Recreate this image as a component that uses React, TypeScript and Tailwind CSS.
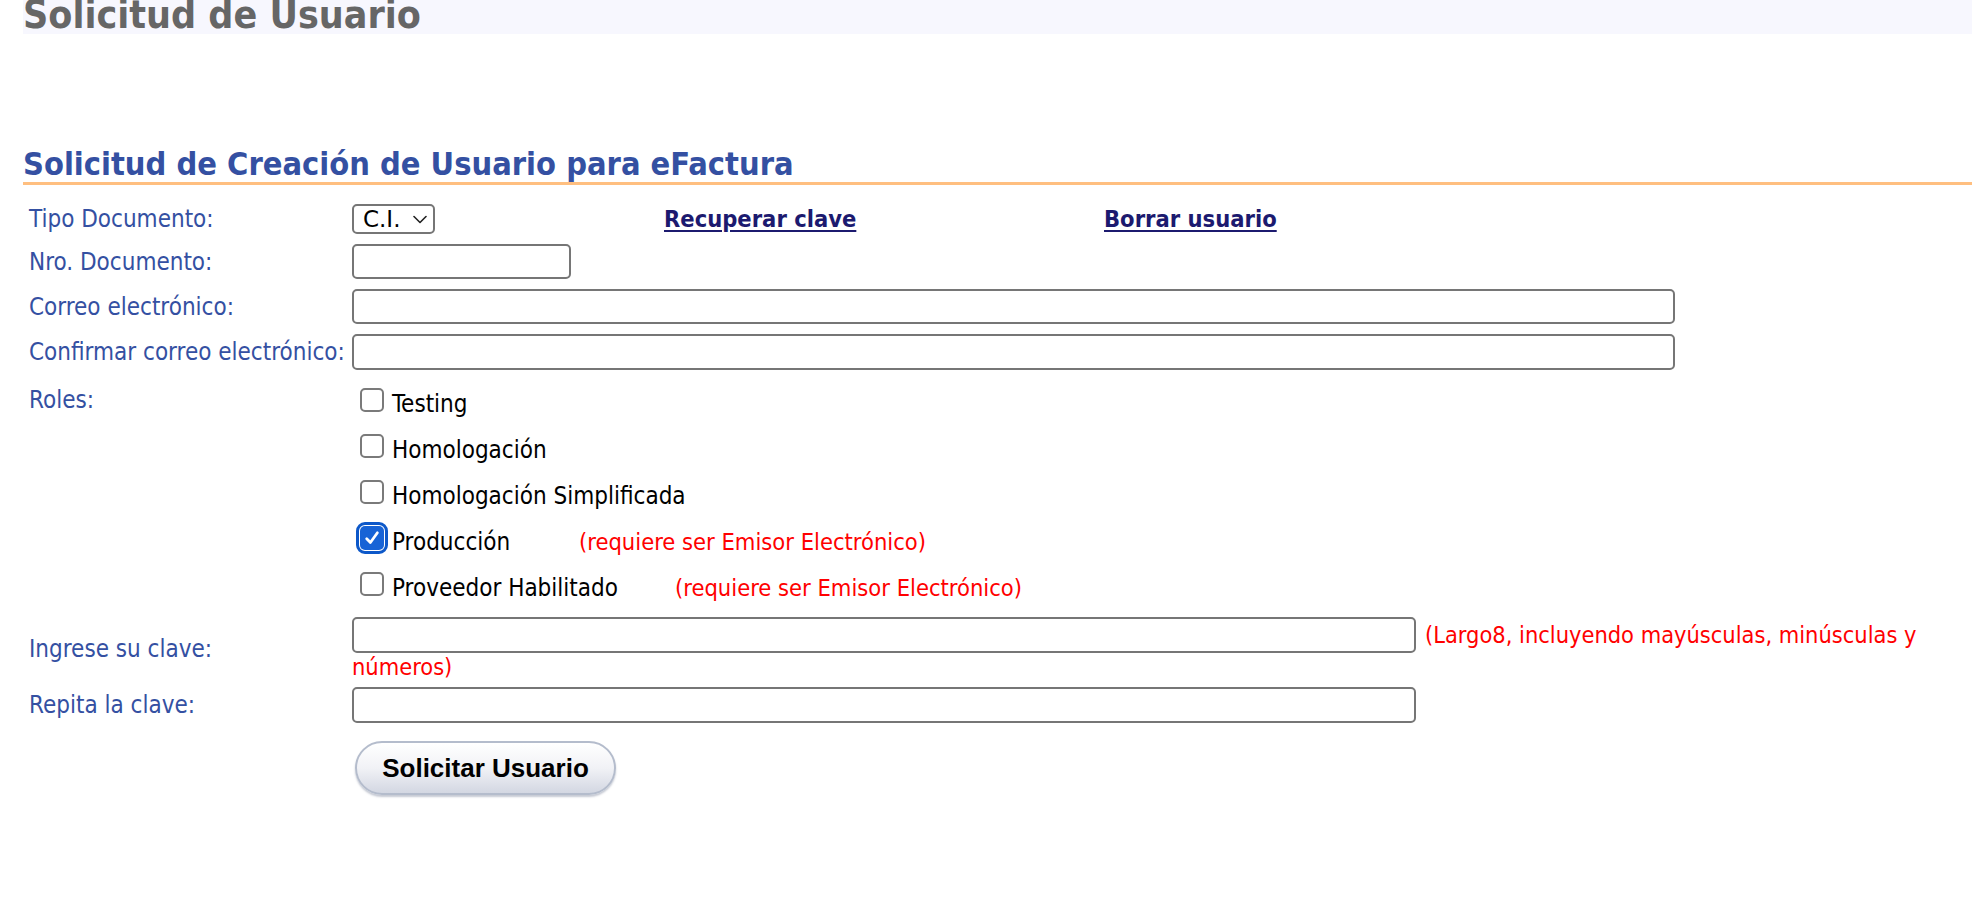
import React from "react";

function Box({ checked = false }: { checked?: boolean }) {
  if (checked) {
    return (
      <span className="-mt-[5px] flex h-[24px] w-[24px] shrink-0 items-center justify-center rounded-[5px] bg-[#1763d6] outline-[3px] outline-offset-[1px] outline-[#0d58c9] outline-solid">
        <svg width="18" height="18" viewBox="0 0 17 17" fill="none">
          <path d="M3.5 9.2 L7 12.8 L13.6 3.6" stroke="white" strokeWidth="2.6" strokeLinecap="round" strokeLinejoin="round" />
        </svg>
      </span>
    );
  }
  return <span className="-mt-[5px] block h-[24px] w-[24px] shrink-0 rounded-[5px] border-2 border-[#7a7a7a] bg-white" />;
}

const label = "w-[329px] shrink-0 pl-[6px] text-[#3450a2]";
const inputCls = "block rounded-[5px] border-2 border-[#767676] bg-white outline-none";

export default function App() {
  return (
    <div className="min-h-[900px] bg-white pl-[23px] font-['DejaVu_Sans_Condensed','DejaVu_Sans',sans-serif] [font-stretch:semi-condensed]">
      <div className="h-[34px] overflow-hidden bg-[#f7f7fe]">
        <h1 className="-mt-[5px] text-[39px] font-bold leading-none text-[#666666]">Solicitud de Usuario</h1>
      </div>
      <h2 className="mt-[114px] border-b-[3px] border-[#ffbf80] pb-[2px] text-[32.3px] font-bold leading-none text-[#3450a2]">
        Solicitud de Creación de Usuario para eFactura
      </h2>

      <div className="mt-[19px] flex flex-col text-[24px] leading-[28px]">
        {/* Tipo Documento */}
        <div className="flex h-[30px] items-center">
          <span className={label}>Tipo Documento:</span>
          <div className="w-[312px] shrink-0">
            <div
              role="combobox"
              className="flex h-[30px] w-[83px] items-center justify-between rounded-[5px] border-2 border-[#767676] bg-white pl-[9px] pr-[6px] font-['DejaVu_Sans',sans-serif] text-[23px] text-black [font-stretch:normal]"
            >
              <span>C.I.</span>
              <svg width="14" height="9" viewBox="0 0 14 9" fill="none">
                <path d="M1 1.5 L7 7.5 L13 1.5" stroke="#222" strokeWidth="1.6" strokeLinecap="round" strokeLinejoin="round" />
              </svg>
            </div>
          </div>
          <a href="#" className="w-[440px] shrink-0 font-bold text-[#1c1a6f] underline decoration-2 underline-offset-[3px] text-[23.5px]">
            Recuperar clave
          </a>
          <a href="#" className="font-bold text-[#1c1a6f] underline decoration-2 underline-offset-[3px] text-[23.5px]">
            Borrar usuario
          </a>
        </div>

        {/* Nro Documento */}
        <div className="mt-[10px] flex h-[35px] items-center">
          <span className={label}>Nro. Documento:</span>
          <input className={inputCls + " h-[35px] w-[219px]"} />
        </div>

        {/* Correo */}
        <div className="mt-[10px] flex h-[35px] items-center">
          <span className={label}>Correo electrónico:</span>
          <input className={inputCls + " h-[35px] w-[1323px]"} />
        </div>

        {/* Confirmar */}
        <div className="mt-[10px] flex h-[36px] items-center">
          <span className={label}>Confirmar correo electrónico:</span>
          <input className={inputCls + " h-[36px] w-[1323px]"} />
        </div>

        {/* Roles */}
        <div className="mt-[9px] flex">
          <span className={label + " leading-[42px]"}>Roles:</span>
          <div className="flex flex-col text-black">
            <div className="flex h-[46px] items-center pl-[8px]">
              <Box />
              <span className="ml-[8px] mt-[3px]">Testing</span>
            </div>
            <div className="flex h-[46px] items-center pl-[8px]">
              <Box />
              <span className="ml-[8px] mt-[3px]">Homologación</span>
            </div>
            <div className="flex h-[46px] items-center pl-[8px]">
              <Box />
              <span className="ml-[8px] mt-[3px]">Homologación Simplificada</span>
            </div>
            <div className="flex h-[46px] items-center pl-[8px]">
              <Box checked />
              <span className="ml-[8px] mt-[3px] w-[187px] shrink-0">Producción</span>
              <span className="mt-[3px] text-[23.5px] text-[#ff0000]">(requiere ser Emisor Electrónico)</span>
            </div>
            <div className="flex h-[46px] items-center pl-[8px]">
              <Box />
              <span className="ml-[8px] mt-[3px] w-[283px] shrink-0">Proveedor Habilitado</span>
              <span className="mt-[3px] text-[23.5px] text-[#ff0000]">(requiere ser Emisor Electrónico)</span>
            </div>
          </div>
        </div>

        {/* Clave */}
        <div className="mt-[8px] flex items-center">
          <span className={label}>Ingrese su clave:</span>
          <div className="flex flex-col text-[23.4px]">
            <div className="flex items-center">
              <input type="password" className={inputCls + " h-[36px] w-[1064px]"} />
              <span className="ml-[9px] whitespace-nowrap text-[#ff0000]">(Largo8, incluyendo mayúsculas, minúsculas y</span>
            </div>
            <span className="leading-[28px] text-[#ff0000]">números)</span>
          </div>
        </div>

        {/* Repita */}
        <div className="mt-[6px] flex h-[36px] items-center">
          <span className={label}>Repita la clave:</span>
          <input type="password" className={inputCls + " h-[36px] w-[1064px]"} />
        </div>

        {/* Button */}
        <div className="mt-[18px] pl-[332px]">
          <button className="h-[54px] w-[261px] rounded-full border-2 border-[#b4bccc] bg-linear-to-b from-[#ffffff] via-[#f1f2f6] to-[#d3d7e2] font-['Liberation_Sans',Arial,sans-serif] text-[26px] font-bold text-black shadow-[0_2px_2px_rgba(90,100,130,0.35)] [font-stretch:normal]">
            Solicitar Usuario
          </button>
        </div>
      </div>
    </div>
  );
}
